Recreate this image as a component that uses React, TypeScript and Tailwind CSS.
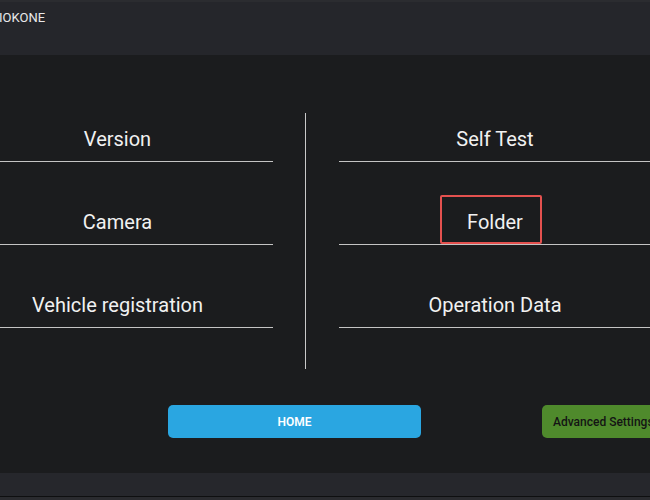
const rowText = "text-[20px] leading-[22px] text-[#f1f1f1]";

function MenuRow({ label, marked }: { label: string; marked?: boolean }) {
  return (
    <div className="relative flex h-[83px] items-end justify-center border-b border-[#c4c4c4] pb-[11px]">
      <span className={rowText}>{label}</span>
      {marked && (
        <div className="absolute left-[101px] top-[33px] h-[49px] w-[102px] rounded-[2px] border-2 border-[#e4514f]" />
      )}
    </div>
  );
}

export default function App() {
  return (
    <div
      className="flex h-[500px] w-[650px] flex-col overflow-hidden bg-[#1b1c1e]"
      style={{ fontFamily: "Roboto, 'Liberation Sans', sans-serif" }}
    >
      {/* top bar */}
      <header className="h-[55px] shrink-0 border-t-[2px] border-[#2b2c30] bg-[#25262b] pt-[3px]">
        <span className="-ml-[1px] text-[13px] leading-[16px] text-[#e9e9ea]">IOKONE</span>
      </header>

      <main className="flex-1 pt-[24px]">
        <div className="-ml-[38px] flex items-start">
          <div className="w-[311px] shrink-0">
            <MenuRow label="Version" />
            <MenuRow label="Camera" />
            <MenuRow label="Vehicle registration" />
          </div>
          <div className="ml-[32px] mt-[34px] h-[256px] w-px shrink-0 bg-[#c9c9c9]" />
          <div className="ml-[33px] w-[312px] shrink-0">
            <MenuRow label="Self Test" />
            <MenuRow label="Folder" marked />
            <MenuRow label="Operation Data" />
          </div>
        </div>

        <div className="mt-[36px] flex items-center">
          <button className="ml-[168px] h-[33px] w-[253px] shrink-0 rounded-[5px] bg-[#2aa6e1] text-[12px] font-semibold text-white">
            HOME
          </button>
          <button className="ml-[121px] h-[33px] w-[124px] shrink-0 rounded-[5px] bg-[#4f8a2c] pl-[11px] text-left text-[12px] font-medium whitespace-nowrap text-[#141414]">
            Advanced Settings
          </button>
        </div>
      </main>

      {/* bottom bar */}
      <footer className="shrink-0">
        <div className="h-[23px] bg-[#26272c]" />
        <div className="h-px bg-[#0e0f10]" />
        <div className="h-[3px] bg-[#2a2b2f]" />
      </footer>
    </div>
  );
}
